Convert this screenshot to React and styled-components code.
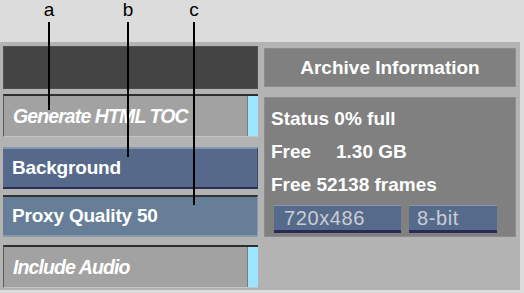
import React from 'react';
import styled, {createGlobalStyle} from 'styled-components';

const GlobalStyle = createGlobalStyle`
  body {
    margin: 0;
    background: #dcdcdc;
    font-family: "Liberation Sans", Arial, sans-serif;
  }
`;

const Page = styled.div`
  position: relative;
  width: 524px;
  height: 293px;
  overflow: hidden;
`;

const Header = styled.div`
  height: 42px;
`;

const Callout = styled.div`
  position: absolute;
  top: 0;
  left: ${p => p.x - 10}px;
  width: 20px;
  display: flex;
  flex-direction: column;
  align-items: center;
  pointer-events: none;
  z-index: 2;
  span {
    font-size: 19px;
    line-height: 20px;
    color: #000;
  }
  i {
    display: block;
    width: 2px;
    height: ${p => p.len}px;
    margin-top: 2px;
    background: #000;
  }
`;

const Panel = styled.div`
  box-sizing: border-box;
  width: 520px;
  height: 248px;
  padding: 4px 4px 0 3px;
  background: #b3b3b3;
  display: grid;
  grid-template-columns: 255px 252px;
  column-gap: 6px;
  align-items: start;
  color: #fff;
  font-weight: bold;
  font-size: 19px;
`;

const Column = styled.div`
  display: flex;
  flex-direction: column;
`;

const DarkBar = styled.div`
  height: 43px;
  background: #444;
  box-shadow: inset 0 0 0 1px #505050;
`;

const Toggle = styled.div`
  box-sizing: border-box;
  height: 43px;
  margin-top: ${p => p.gap}px;
  display: flex;
  align-items: stretch;
  background: #a2a2a2;
  border-top: 2px solid #2e2e2e;
  border-left: 1px solid #5a5a5a;
  border-bottom: 1px solid #c4c4c4;
  span {
    flex: 1;
    display: flex;
    align-items: center;
    padding-left: 9px;
    font-style: italic;
    font-size: 19.5px;
    letter-spacing: -0.9px;
  }
  b {
    width: 10px;
    background: #9de5ff;
    border-left: 1px solid #7a7a7a;
  }
`;

const Button = styled.div`
  box-sizing: border-box;
  height: 42px;
  margin-top: ${p => p.gap}px;
  display: flex;
  align-items: center;
  padding-left: 9px;
  letter-spacing: -0.2px;
  background: ${p => (p.field ? '#667e98' : '#56698a')};
  border-top: 2px solid ${p => (p.field ? '#333' : '#8595ad')};
  border-bottom: 2px solid ${p => (p.field ? '#8a9aae' : '#2b2f58')};
  border-right: 1px solid ${p => (p.field ? '#8a9aae' : '#3c4a66')};
`;

const InfoHeader = styled.div`
  height: 39px;
  margin-top: 2px;
  display: flex;
  align-items: center;
  justify-content: center;
  background: #808080;
  box-shadow: inset 0 0 0 1px #8c8c8c;
`;

const InfoBox = styled.div`
  box-sizing: border-box;
  height: 140px;
  margin-top: 10px;
  padding: 5px 0 0 7px;
  background: #808080;
  box-shadow: inset 0 0 0 1px #8c8c8c;
`;

const InfoLine = styled.div`
  height: 33px;
  line-height: 33px;
  display: flex;
`;

const Key = styled.span`
  width: ${p => p.w}px;
`;

const Chips = styled.div`
  display: flex;
  gap: 8px;
  margin: 4px 0 0 3px;
`;

const Chip = styled.div`
  box-sizing: border-box;
  width: ${p => p.w}px;
  height: 28px;
  padding-left: ${p => p.pad}px;
  display: flex;
  align-items: center;
  background: #566b8b;
  color: #c9cdd3;
  font-weight: normal;
  font-size: 20px;
  letter-spacing: 0.6px;
  border-top: 1px solid #8797ad;
  border-bottom: 3px solid #2a2a58;
`;

const callouts = [
  {label: 'a', x: 49, len: 88},
  {label: 'b', x: 128, len: 135},
  {label: 'c', x: 194, len: 183},
];

const App = () => {
  return (
    <Page>
      <GlobalStyle />
      <Header />
      {callouts.map(c => (
        <Callout key={c.label} x={c.x} len={c.len}>
          <span>{c.label}</span>
          <i />
        </Callout>
      ))}
      <Panel>
        <Column>
          <DarkBar />
          <Toggle gap={5}>
            <span>Generate HTML TOC</span>
            <b />
          </Toggle>
          <Button gap={10}>Background</Button>
          <Button gap={6} field>Proxy Quality 50</Button>
          <Toggle gap={8}>
            <span>Include Audio</span>
            <b />
          </Toggle>
        </Column>
        <Column>
          <InfoHeader>Archive Information</InfoHeader>
          <InfoBox>
            <InfoLine>Status 0% full</InfoLine>
            <InfoLine><Key w={65}>Free</Key>1.30 GB</InfoLine>
            <InfoLine>Free 52138 frames</InfoLine>
            <Chips>
              <Chip w={127} pad={10}>720x486</Chip>
              <Chip w={88} pad={8}>8-bit</Chip>
            </Chips>
          </InfoBox>
        </Column>
      </Panel>
    </Page>
  );
};

export default App;
